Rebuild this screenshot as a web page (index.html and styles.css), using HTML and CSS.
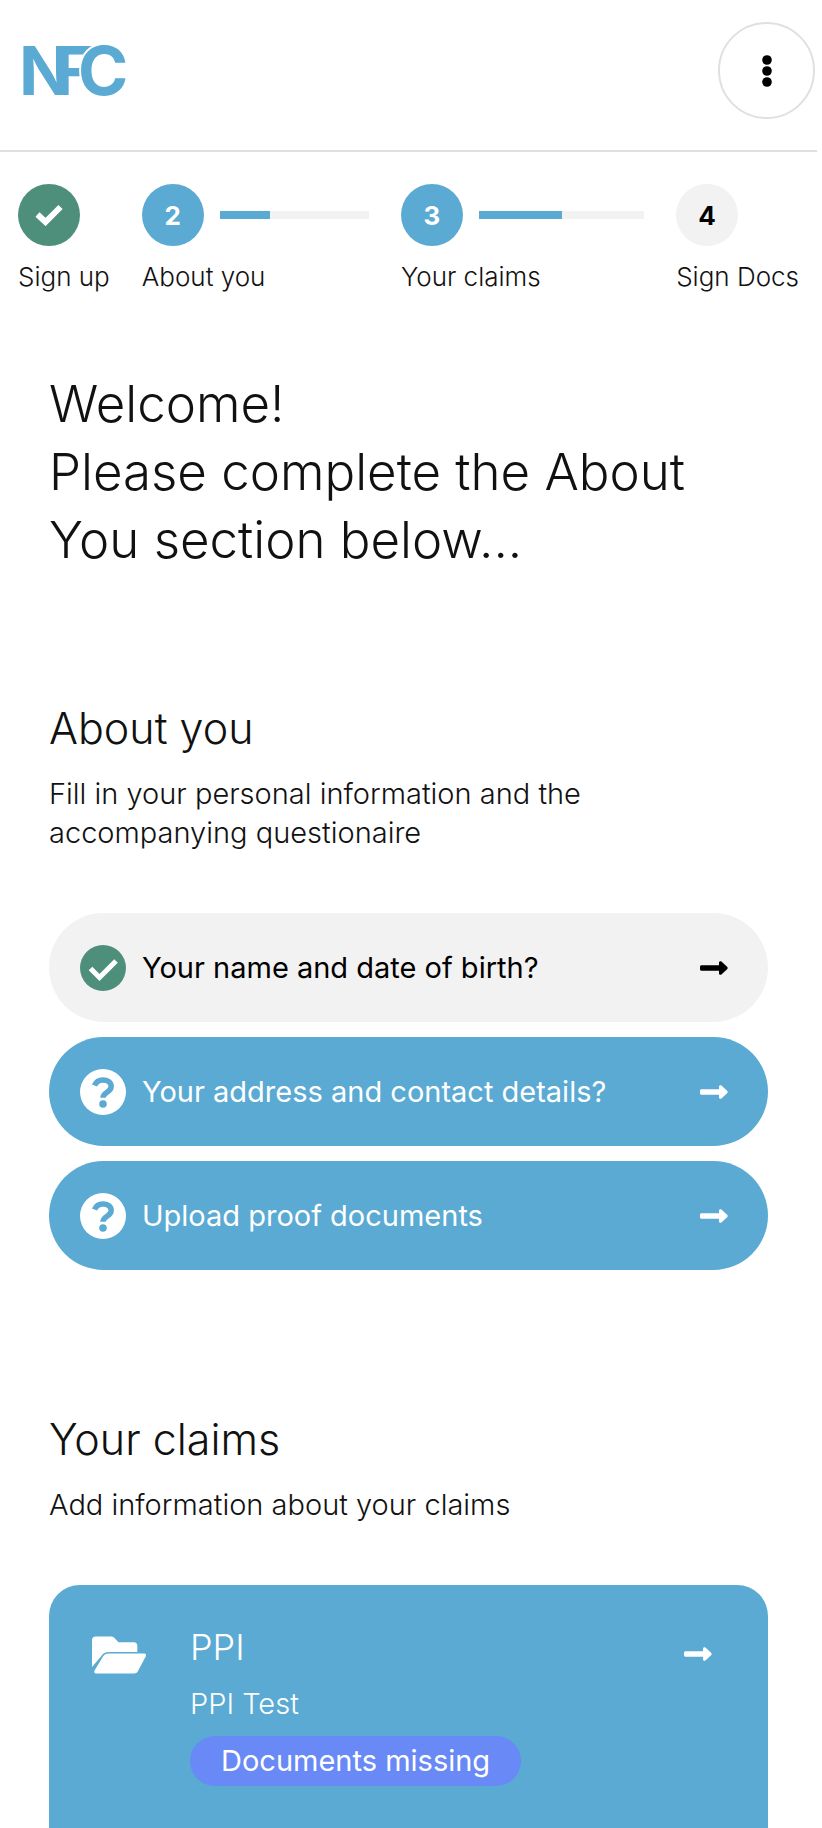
FILE: index.html
```html
<!DOCTYPE html>
<html lang="en">
<head>
  <meta charset="UTF-8">
  <meta name="viewport" content="width=device-width, initial-scale=1">
  <title>NFC</title>
  <link rel="stylesheet" href="styles.css">
</head>
<body>
  <!-- shared icons -->
  <svg class="sprite" aria-hidden="true">
    <symbol id="arrow" viewBox="0 0 28 14">
      <path d="M1.500 4.200H19V1.600c0-1.300 1.400-1.900 2.400-1.100l5.700 5.300c.7.7.7 1.700 0 2.400l-5.700 5.300c-1 .8-2.400.2-2.400-1.100V9.800H1.500C.7 9.800 0 9.100 0 8.300V5.700C0 4.900.7 4.200 1.500 4.200z" fill="currentColor"/>
    </symbol>
    <symbol id="question" viewBox="0 0 46 46">
      <circle cx="23" cy="23" r="23" fill="#fff"/>
      <path d="M14.500 16.500c1.600-3.800 4.900-5.500 8.300-5.500 5 0 8.400 2.500 8.400 6.600 0 5.900-8.200 5.400-8.200 11.200" fill="none" stroke="#5aaad3" stroke-width="5.500"/>
      <circle cx="23" cy="35" r="3.800" fill="#5aaad3"/>
    </symbol>
  </svg>

  <header class="header">
    <a class="logo" href="#" aria-label="NFC">
      <svg width="120" height="90" viewBox="0 0 120 90">
        <text x="1" y="69">N</text>
        <text x="36" y="69">F</text>
        <text class="logo-front" x="60" y="69">C</text>
      </svg>
    </a>
    <button class="menu" type="button" aria-label="Menu">
      <svg width="10" height="32" viewBox="0 0 10 32">
        <circle cx="5" cy="5" r="4.800"/>
        <circle cx="5" cy="16" r="4.800"/>
        <circle cx="5" cy="27" r="4.800"/>
      </svg>
    </button>
  </header>

  <ol class="steps">
    <li class="step">
      <div class="step-top">
        <span class="step-circle done">
          <svg width="28" height="22" viewBox="0 0 28 22"><path d="M2.500 10.500l8 7.500L25.500 3" fill="none" stroke="#fff" stroke-width="6"/></svg>
        </span>
      </div>
      <span class="step-label">Sign up</span>
    </li>
    <li class="step grow">
      <div class="step-top">
        <span class="step-circle active">2</span>
        <div class="bar"><div class="bar-fill" style="width: 34%"></div></div>
      </div>
      <span class="step-label">About you</span>
    </li>
    <li class="step grow">
      <div class="step-top">
        <span class="step-circle active">3</span>
        <div class="bar"><div class="bar-fill" style="width: 50%"></div></div>
      </div>
      <span class="step-label">Your claims</span>
    </li>
    <li class="step">
      <div class="step-top">
        <span class="step-circle">4</span>
      </div>
      <span class="step-label">Sign Docs</span>
    </li>
  </ol>

  <main class="content">
    <h1>Welcome!<br>Please complete the About You section below...</h1>

    <section class="about">
      <h2>About you</h2>
      <p class="intro">Fill in your personal information and the accompanying questionaire</p>
      <div class="questions">
        <a class="pill complete" href="#">
          <svg class="pill-icon" viewBox="0 0 46 46"><circle cx="23" cy="23" r="23" fill="#4e8f7b"/><path d="M10.500 23.500l9 9L36 16" fill="none" stroke="#fff" stroke-width="5"/></svg>
          <span class="pill-text">Your name and date of birth?</span>
          <svg class="arrow"><use href="#arrow"/></svg>
        </a>
        <a class="pill" href="#">
          <svg class="pill-icon"><use href="#question"/></svg>
          <span class="pill-text">Your address and contact details?</span>
          <svg class="arrow"><use href="#arrow"/></svg>
        </a>
        <a class="pill" href="#">
          <svg class="pill-icon"><use href="#question"/></svg>
          <span class="pill-text">Upload proof documents</span>
          <svg class="arrow"><use href="#arrow"/></svg>
        </a>
      </div>
    </section>

    <section class="claims">
      <h2>Your claims</h2>
      <p class="intro">Add information about your claims</p>
      <a class="card" href="#">
        <svg class="folder" viewBox="0 0 54 38">
          <path d="M0 31V4c0-2.200 1.500-3.500 3.500-3.500H19c1.500 0 2.500.5 3.500 1.500l4 4.200H42c2 0 3.300 1.300 3.300 3.300V16H17c-3.500 0-6 1.300-7.800 4.200z" fill="#fff"/>
          <path d="M16.500 17.500H52c1.800 0 2.500 1.500 1.700 3L46 35c-1 1.800-2.300 2.500-4 2.500H4.500c-2 0-2.800-1.500-1.800-3.200L11 20.500c1.300-2 3-3 5.500-3z" fill="#fff"/>
        </svg>
        <div class="card-body">
          <h3>PPI</h3>
          <p class="card-text">PPI Test</p>
          <span class="badge">Documents missing</span>
        </div>
        <svg class="arrow"><use href="#arrow"/></svg>
      </a>
    </section>
  </main>
</body>
</html>
```
FILE: styles.css
```css
* {
  box-sizing: border-box;
}
body {
  margin: 0;
  padding-right: 5px;
  background: #fff;
  color: #111;
  font-family: Inter, "Liberation Sans", sans-serif;
  font-weight: 300;
}
h1, h2, h3, p, ol {
  margin: 0;
  padding: 0;
  font-weight: 300;
}
a {
  color: inherit;
  text-decoration: none;
}
svg {
  display: block;
}
.sprite {
  display: none;
}

/* header */
.header {
  display: flex;
  align-items: center;
  justify-content: space-between;
  padding: 22px 2px 31px 18px;
  border-bottom: 2px solid #e0e0e0;
}
.logo text {
  fill: #5aaad3;
  font-size: 68px;
  font-weight: 700;
}
.logo .logo-front {
  stroke: #fff;
  stroke-width: 4px;
  paint-order: stroke;
}
.menu {
  display: flex;
  align-items: center;
  justify-content: center;
  width: 97px;
  height: 97px;
  padding: 0;
  border: 2px solid #e0e0e0;
  border-radius: 50%;
  background: #fff;
}

/* progress steps */
.steps {
  display: flex;
  gap: 32px;
  padding: 32px 18px 0;
  list-style: none;
}
.grow {
  flex: 1 1 auto;
}
.step-top {
  display: flex;
  align-items: center;
  gap: 16px;
  margin-bottom: 16px;
}
.step-circle {
  display: flex;
  flex: none;
  align-items: center;
  justify-content: center;
  width: 62px;
  height: 62px;
  border-radius: 50%;
  background: #f2f2f2;
  color: #000;
  font-size: 26px;
  font-weight: 700;
}
.step-circle.done {
  background: #4e8f7b;
}
.step-circle.active {
  background: #5aaad3;
  color: #fff;
}
.bar {
  flex: 1;
  height: 8px;
  background: #f2f2f2;
}
.bar-fill {
  height: 100%;
  background: #5aaad3;
}
.step-label {
  display: block;
  font-size: 26px;
  line-height: 30px;
  white-space: nowrap;
}

/* content */
.content {
  padding: 78px 49px 0;
}
h1 {
  font-size: 51px;
  line-height: 68px;
}
h2 {
  margin-bottom: 20px;
  font-size: 43px;
  line-height: 52px;
}
.intro {
  max-width: 600px;
  margin-bottom: 61px;
  font-size: 29px;
  line-height: 39px;
}
.about {
  margin-top: 128px;
}
.claims {
  margin-top: 143px;
}
.questions {
  display: grid;
  gap: 15px;
}
.arrow {
  flex: none;
  width: 28px;
  height: 14px;
}

.pill {
  display: flex;
  align-items: center;
  gap: 16px;
  min-height: 109px;
  padding: 0 40px 0 31px;
  border-radius: 55px;
  background: #5aaad3;
  color: #fff;
  font-size: 29px;
  font-weight: 400;
}
.pill.complete {
  background: #f2f2f2;
  color: #000;
}
.pill-icon {
  flex: none;
  width: 46px;
  height: 46px;
}
.pill-text {
  flex: 1;
}

.card {
  display: flex;
  gap: 44px;
  padding: 40px 56px 43px 43px;
  border-radius: 31px 31px 0 0;
  background: #5aaad3;
  color: #fff;
}
.folder {
  flex: none;
  width: 54px;
  height: 38px;
  margin-top: 11px;
}
.card .arrow {
  margin-top: 22px;
}
.card-body {
  flex: 1;
}
h3 {
  margin-bottom: 15px;
  font-size: 36px;
  line-height: 44px;
}
.card-text {
  margin-bottom: 13px;
  font-size: 29px;
  line-height: 39px;
}
.badge {
  display: inline-block;
  padding: 0 31px;
  border-radius: 25px;
  background: #6889f6;
  font-size: 29px;
  font-weight: 400;
  line-height: 50px;
  vertical-align: top;
}
```
